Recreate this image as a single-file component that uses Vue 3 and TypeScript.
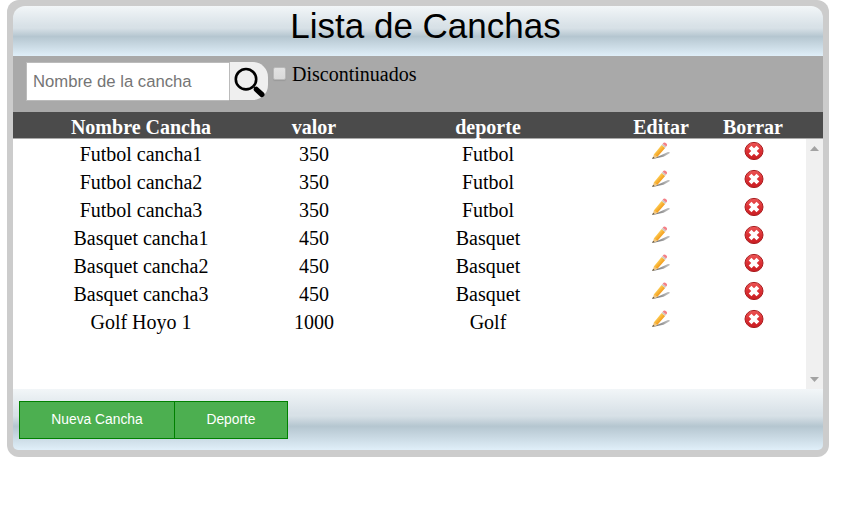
<script setup lang="ts">
import { ref } from 'vue'

interface Cancha {
  nombre: string
  valor: number
  deporte: string
}

const filtro = ref('')
const discontinuados = ref(false)

const canchas: Cancha[] = [
  { nombre: 'Futbol cancha1', valor: 350, deporte: 'Futbol' },
  { nombre: 'Futbol cancha2', valor: 350, deporte: 'Futbol' },
  { nombre: 'Futbol cancha3', valor: 350, deporte: 'Futbol' },
  { nombre: 'Basquet cancha1', valor: 450, deporte: 'Basquet' },
  { nombre: 'Basquet cancha2', valor: 450, deporte: 'Basquet' },
  { nombre: 'Basquet cancha3', valor: 450, deporte: 'Basquet' },
  { nombre: 'Golf Hoyo 1', valor: 1000, deporte: 'Golf' },
]
</script>

<template>
  <main class="panel">
    <header class="title-bar"><h1>Lista de Canchas</h1></header>

    <section class="search-bar">
      <input v-model="filtro" class="search-input" type="text" placeholder="Nombre de la cancha" />
      <button class="search-button" type="button" aria-label="Buscar">
        <svg width="32" height="32" viewBox="0 0 32 32">
          <circle cx="12" cy="12.2" r="10.2" fill="none" stroke="#000" stroke-width="2.6" />
          <path d="M19.3 19.5l3 3" stroke="#222" stroke-width="1.6" />
          <path d="M22.3 22.3l5.6 5.2" stroke="#000" stroke-width="5.2" stroke-linecap="round" />
        </svg>
      </button>
      <label class="check">
        <input v-model="discontinuados" class="box" type="checkbox" />
        <span>Discontinuados</span>
      </label>
    </section>

    <div class="row head">
      <span>Nombre Cancha</span><span>valor</span><span>deporte</span><span>Editar</span><span>Borrar</span>
    </div>

    <section class="list">
      <div class="rows">
        <div v-for="c in canchas" :key="c.nombre" class="row">
          <span>{{ c.nombre }}</span>
          <span>{{ c.valor }}</span>
          <span>{{ c.deporte }}</span>
          <span class="icon">
            <svg width="20" height="20" viewBox="0 0 20 20">
              <defs>
                <linearGradient id="lapiz" x1="0" y1="0" x2="1" y2="1">
                  <stop offset="0.3" stop-color="#ffd45c" />
                  <stop offset="0.65" stop-color="#f39a18" />
                </linearGradient>
                <linearGradient id="sombra" x1="0" y1="0" x2="1" y2="0">
                  <stop offset="0" stop-color="#444" stop-opacity="0.9" />
                  <stop offset="1" stop-color="#888" stop-opacity="0.5" />
                </linearGradient>
              </defs>
              <path d="M1.5 18L17 11.1Q19.4 10.5 18.6 12.3L12.5 15.7Z" fill="url(#sombra)" />
              <path d="M1.3 18L3 13.2L6.2 15.9Z" fill="#efc57f" />
              <path d="M1.2 18.1L2 15.9L3.5 17.1Z" fill="#333" />
              <path d="M2.8 13.4L10.6 4L14.1 6.9L6.3 16Z" fill="url(#lapiz)" />
              <path d="M10.6 4L11.7 2.7L15.2 5.6L14.1 6.9Z" fill="#cfc8bd" />
              <path d="M11.7 2.7Q13.2 .8 15.1 2.2T15.2 5.6Z" fill="#f47f86" />
            </svg>
          </span>
          <span class="icon delete">
            <svg width="20" height="20" viewBox="0 0 20 20">
              <defs>
                <linearGradient id="borrar" x1="0" y1="0" x2="0" y2="1">
                  <stop offset="0" stop-color="#ed5757" />
                  <stop offset="0.5" stop-color="#dc3034" />
                  <stop offset="1" stop-color="#c91d22" />
                </linearGradient>
              </defs>
              <ellipse cx="10" cy="10" rx="9" ry="8.6" fill="url(#borrar)" stroke="#a91e20" />
              <path d="M6.1 6.2l7.8 7.6M13.9 6.2l-7.8 7.6" stroke="#fff" stroke-width="3.9" />
            </svg>
          </span>
        </div>
      </div>
      <div class="scrollbar">
        <svg width="9" height="5" viewBox="0 0 9 5"><path d="M0 5L4.5 0L9 5Z" fill="#a3a3a3" /></svg>
        <svg width="9" height="5" viewBox="0 0 9 5"><path d="M0 0L4.5 5L9 0Z" fill="#a3a3a3" /></svg>
      </div>
    </section>

    <footer class="footer">
      <button class="action first" type="button">Nueva Cancha</button>
      <button class="action" type="button">Deporte</button>
    </footer>
  </main>
</template>

<style>
body {
  background: #fff;
}
</style>

<style scoped>
.panel {
  box-sizing: border-box;
  width: 822px;
  height: 457px;
  margin-left: 7px;
  padding: 6px 6px 7px;
  border-radius: 12px;
  background: #ccc;
  color: #000;
  font-family: "Liberation Serif", "Times New Roman", serif;
  font-size: 20px;
}
.title-bar,
.footer {
  background: linear-gradient(to bottom, #f2f6f8 0%, #d8e1e7 40%, #d8e1e7 44%, #b5c6d0 61%, #e0eff9 100%);
}
.title-bar {
  height: 50px;
  border-radius: 12px 12px 0 0;
}
h1 {
  margin: 0;
  padding-left: 15px;
  text-align: center;
  font: 400 35px/40px "Liberation Sans", Arial, sans-serif;
}
.search-bar {
  box-sizing: border-box;
  display: flex;
  align-items: flex-start;
  height: 56px;
  padding: 6px 0 0 13px;
  background: #a9a9a9;
}
.search-input {
  box-sizing: border-box;
  width: 203px;
  height: 39px;
  margin: 0;
  padding: 0 6px;
  border: 1px solid #bbb;
  border-right: 0;
  border-radius: 0;
  outline: 0;
  background: #fff;
  font: 16.7px "Liberation Sans", Arial, sans-serif;
}
.search-input::placeholder {
  color: #757575;
}
.search-button {
  box-sizing: border-box;
  width: 39px;
  height: 38px;
  padding: 3px 0 0 4px;
  border: 0;
  border-left: 1px solid #bbb;
  border-radius: 0 15px 15px 0;
  background: #efefef;
}
.search-button svg {
  display: block;
}
.check {
  display: flex;
  align-items: flex-start;
  line-height: 25px;
}
.box {
  appearance: none;
  box-sizing: border-box;
  width: 13px;
  height: 13px;
  margin: 5px 6px 0 5px;
  border: 1px solid #b9b9b9;
  border-radius: 2px;
  background: linear-gradient(#e2e2e2, #dadada);
  box-shadow: 0 1px 1px #999;
}
.row {
  display: grid;
  grid-template-columns: 256px 90px 258px 88px 96px;
  height: 28px;
  line-height: 30px;
  text-align: center;
}
.row > span {
  white-space: nowrap;
}
.head {
  box-sizing: border-box;
  height: 27px;
  border-bottom: 1px solid #a9a9a9;
  background: #4b4b4b;
  color: #fff;
  font-weight: bold;
  line-height: 31px;
}
.list {
  display: flex;
  justify-content: space-between;
  height: 250px;
  background: #fff;
}
.icon {
  display: flex;
  justify-content: center;
  padding-top: 2px;
}
.delete {
  padding-left: 1px;
}
.scrollbar {
  box-sizing: border-box;
  display: flex;
  flex-direction: column;
  justify-content: space-between;
  align-items: center;
  width: 17px;
  padding: 7px 0;
  background: #f0f0f0;
}
.footer {
  box-sizing: border-box;
  display: flex;
  height: 61px;
  padding: 12px 0 0 6px;
  border-radius: 0 0 5px 5px;
}
.action {
  box-sizing: border-box;
  width: 113px;
  height: 38px;
  margin: 0;
  padding: 0 0 2px;
  border: 1px solid #008000;
  border-left: 0;
  background: #4caf50;
  color: #fff;
  font: 13.8px "Liberation Sans", Arial, sans-serif;
}
.first {
  width: 156px;
  border-left: 1px solid #008000;
}
</style>
